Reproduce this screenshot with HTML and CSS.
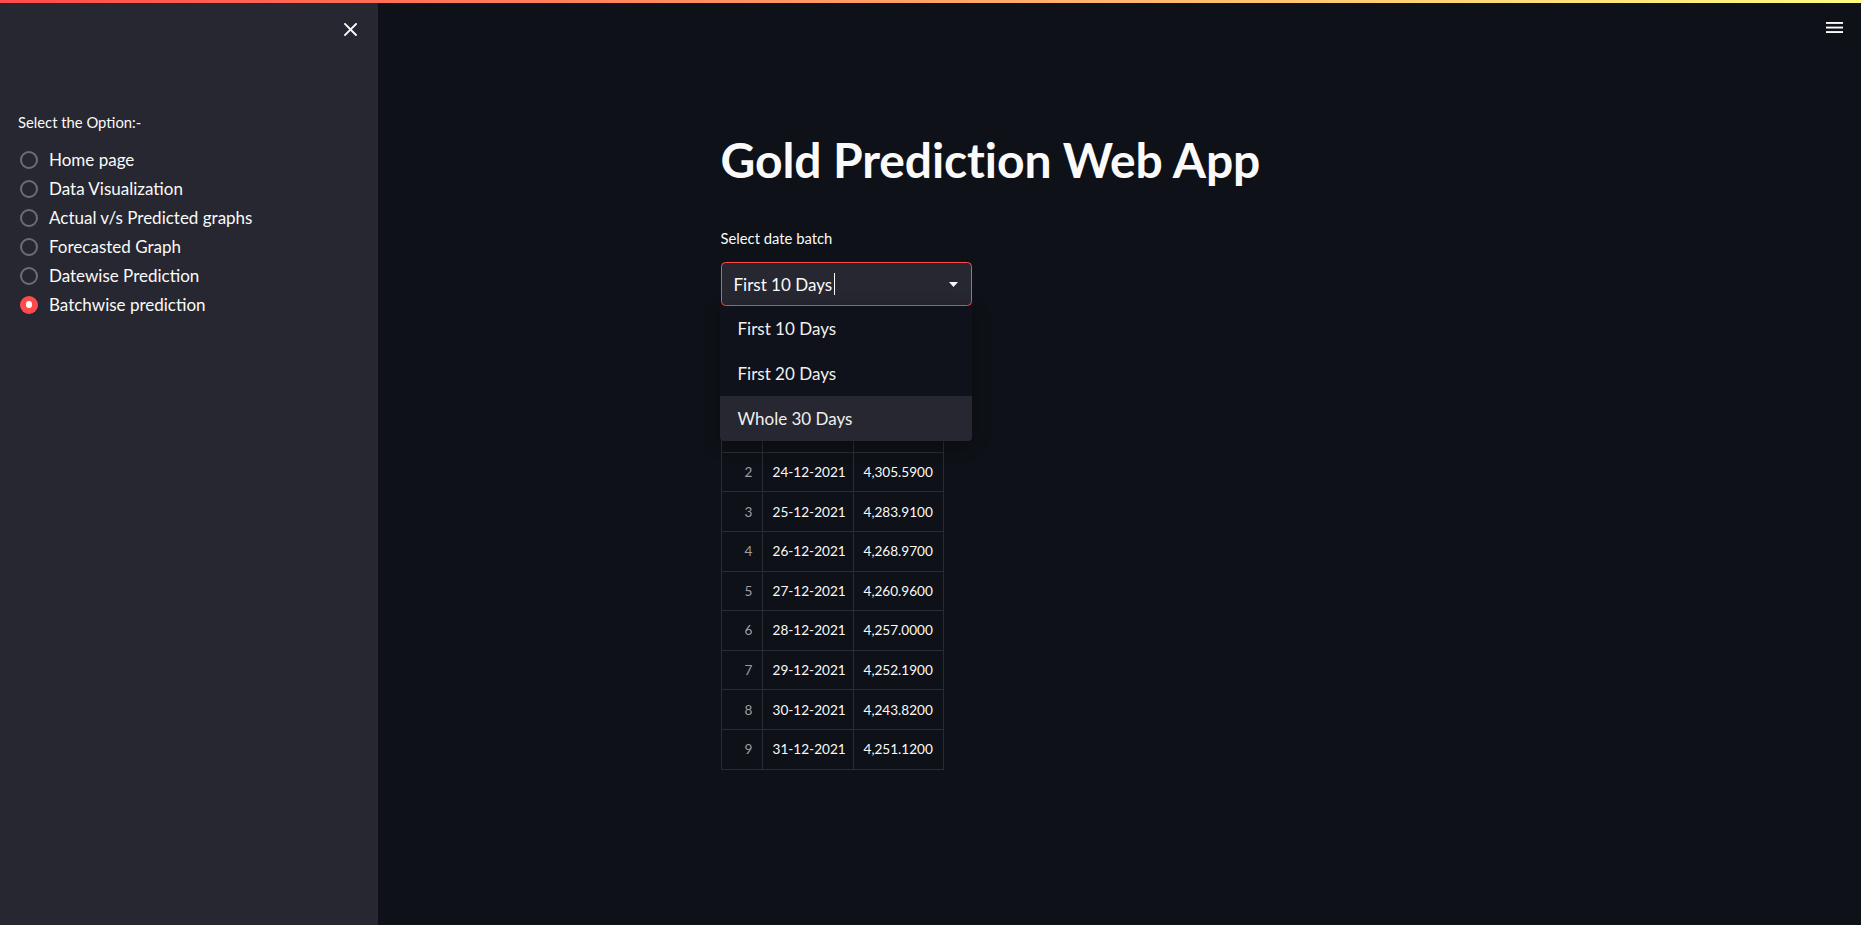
FILE: index.html
```html
<!DOCTYPE html>
<html lang="en">
<head>
<meta charset="utf-8">
<title>Gold Prediction Web App</title>
<link rel="stylesheet" href="styles.css">
</head>
<body>
<div class="decoration"></div>
<div class="app">
  <aside class="sidebar">
    <div class="sidebar-top">
      <button class="icon-btn close-btn" aria-label="Close sidebar">
        <svg width="13" height="13" viewBox="0 0 13 13"><path d="M1 1 L12 12 M12 1 L1 12" stroke="#fafafa" stroke-width="1.9" stroke-linecap="square"/></svg>
      </button>
    </div>
    <div class="sidebar-content">
      <div class="widget-label side-label">Select the Option:-</div>
      <div class="radio-group">
        <label class="radio"><span class="radio-circle"></span><span class="radio-text">Home page</span></label>
        <label class="radio"><span class="radio-circle"></span><span class="radio-text">Data Visualization</span></label>
        <label class="radio"><span class="radio-circle"></span><span class="radio-text">Actual v/s Predicted graphs</span></label>
        <label class="radio"><span class="radio-circle"></span><span class="radio-text">Forecasted Graph</span></label>
        <label class="radio"><span class="radio-circle"></span><span class="radio-text">Datewise Prediction</span></label>
        <label class="radio checked"><span class="radio-circle"></span><span class="radio-text">Batchwise prediction</span></label>
      </div>
    </div>
  </aside>
  <main class="main">
    <header class="toolbar">
      <button class="icon-btn menu-btn" aria-label="Main menu">
        <svg width="17" height="11" viewBox="0 0 17 11"><rect x="0" y="0" width="17" height="1.9" fill="#fafafa"/><rect x="0" y="4.6" width="17" height="1.9" fill="#fafafa"/><rect x="0" y="9.1" width="17" height="1.9" fill="#fafafa"/></svg>
      </button>
    </header>
    <div class="block">
      <h1 class="title">Gold Prediction Web App</h1>
      <div class="select-widget">
        <div class="widget-label">Select date batch</div>
        <div class="select-wrap">
          <div class="select-box">
            <span class="select-value">First 10 Days</span><span class="text-cursor"></span>
            <svg class="caret" width="9" height="5" viewBox="0 0 9 5"><path d="M0 0 L9 0 L4.5 5 Z" fill="#fafafa"/></svg>
          </div>
          <ul class="menu">
            <li class="menu-item">First 10 Days</li>
            <li class="menu-item">First 20 Days</li>
            <li class="menu-item active">Whole 30 Days</li>
          </ul>
        </div>
      </div>
      <table class="data-table">
        <colgroup><col class="col-idx"><col class="col-date"><col class="col-val"></colgroup>
        <thead><tr><th></th><th>Date</th><th>Price</th></tr></thead>
        <tbody>
          <tr><td class="idx">0</td><td>22-12-2021</td><td>4,319.2400</td></tr>
          <tr><td class="idx">1</td><td>23-12-2021</td><td>4,312.8800</td></tr>
          <tr><td class="idx">2</td><td>24-12-2021</td><td>4,305.5900</td></tr>
          <tr><td class="idx">3</td><td>25-12-2021</td><td>4,283.9100</td></tr>
          <tr><td class="idx">4</td><td>26-12-2021</td><td>4,268.9700</td></tr>
          <tr><td class="idx">5</td><td>27-12-2021</td><td>4,260.9600</td></tr>
          <tr><td class="idx">6</td><td>28-12-2021</td><td>4,257.0000</td></tr>
          <tr><td class="idx">7</td><td>29-12-2021</td><td>4,252.1900</td></tr>
          <tr><td class="idx">8</td><td>30-12-2021</td><td>4,243.8200</td></tr>
          <tr><td class="idx">9</td><td>31-12-2021</td><td>4,251.1200</td></tr>
        </tbody>
      </table>
    </div>
  </main>
</div>
</body>
</html>
```

FILE: styles.css
```css
* { box-sizing: border-box; }
html, body { margin: 0; padding: 0; height: 100%; }
body {
  background: #0e1117;
  color: #fafafa;
  font-family: Lato, "Source Sans Pro", "Noto Sans", sans-serif;
  overflow: hidden;
}
.decoration {
  height: 3px;
  background: linear-gradient(90deg, #ff4b4b 0%, #fffd80 100%);
}
.app {
  display: flex;
  height: calc(100vh - 3px);
}
.icon-btn {
  background: none;
  border: 0;
  padding: 0;
  display: flex;
  align-items: center;
  justify-content: center;
  cursor: pointer;
}
/* Sidebar */
.sidebar {
  width: 378px;
  flex: none;
  background: #262730;
  display: flex;
  flex-direction: column;
}
.sidebar-top {
  display: flex;
  justify-content: flex-end;
  padding: 16px 18px 0 0;
  height: 54px;
}
.close-btn { width: 20px; height: 20px; }
.sidebar-content {
  padding: 53px 18px 0 18px;
}
.widget-label {
  font-size: 14.8px;
  line-height: 25px;
  height: 36px;
}
.side-label { height: 35px; }
.radio-group {
  display: flex;
  flex-direction: column;
}
.radio {
  display: flex;
  align-items: center;
  height: 29px;
  gap: 11px;
}
.radio-circle {
  width: 18px;
  height: 18px;
  border-radius: 50%;
  border: 2.4px solid #6d6e74;
  margin-left: 2px;
  flex: none;
  display: flex;
  align-items: center;
  justify-content: center;
}
.radio.checked .radio-circle {
  border: 0;
  background: #ff4b4b;
}
.radio.checked .radio-circle::after {
  content: "";
  width: 6.5px;
  height: 6.5px;
  border-radius: 50%;
  background: #fafafa;
}
.radio-text {
  font-size: 17px;
}
/* Main */
.main {
  flex: 1;
  display: flex;
  flex-direction: column;
}
.toolbar {
  height: 54px;
  display: flex;
  justify-content: flex-end;
  padding: 13px 18px 0 0;
  flex: none;
}
.menu-btn { width: 17px; height: 22px; }
.block {
  width: 798px;
  margin: 0 auto;
  padding-top: 51px;
  display: flex;
  flex-direction: column;
  gap: 18px;
}
.title {
  margin: 0;
  font-size: 48px;
  font-weight: 700;
  line-height: 59px;
  padding: 22px 0 19px;
  letter-spacing: -0.1px;
}
.select-widget {
  width: 251px;
}
.select-wrap {
  position: relative;
}
.select-box {
  height: 44px;
  background: #262730;
  border: 1px solid #ff4b4b;
  border-radius: 4.5px;
  display: flex;
  align-items: center;
  padding: 0 13px 0 12px;
  font-size: 17px;
}
.text-cursor {
  width: 1px;
  height: 22px;
  background: #fafafa;
  margin-left: 2px;
}
.caret { margin-left: auto; }
.menu {
  position: absolute;
  left: -1px;
  right: 0;
  top: 44px;
  margin: 0;
  padding: 0;
  list-style: none;
  background: #0f121a;
  border-radius: 0 0 4px 4px;
  box-shadow: 0 4px 16px rgba(0, 0, 0, 0.35);
  overflow: hidden;
  z-index: 5;
}
.menu-item {
  height: 45px;
  display: flex;
  align-items: center;
  padding-left: 18px;
  font-size: 17px;
  color: #f0f0f0;
}
.menu-item.active { background: #262730; }
/* Table */
.data-table {
  border-collapse: collapse;
  table-layout: fixed;
  width: 222px;
  font-size: 13.6px;
  margin-top: 9px;
}
.col-idx { width: 41px; }
.col-date { width: 91px; }
.col-val { width: 90px; }
.data-table th,
.data-table td {
  height: 39.6px;
  border: 1px solid #2a2c33;
  padding: 0 9px 0 10px;
  white-space: nowrap;
  text-align: left;
  font-weight: 400;
}
.data-table th { color: #a3a5aa; }
.data-table td.idx {
  text-align: right;
  color: #9c9ea3;
}
```
